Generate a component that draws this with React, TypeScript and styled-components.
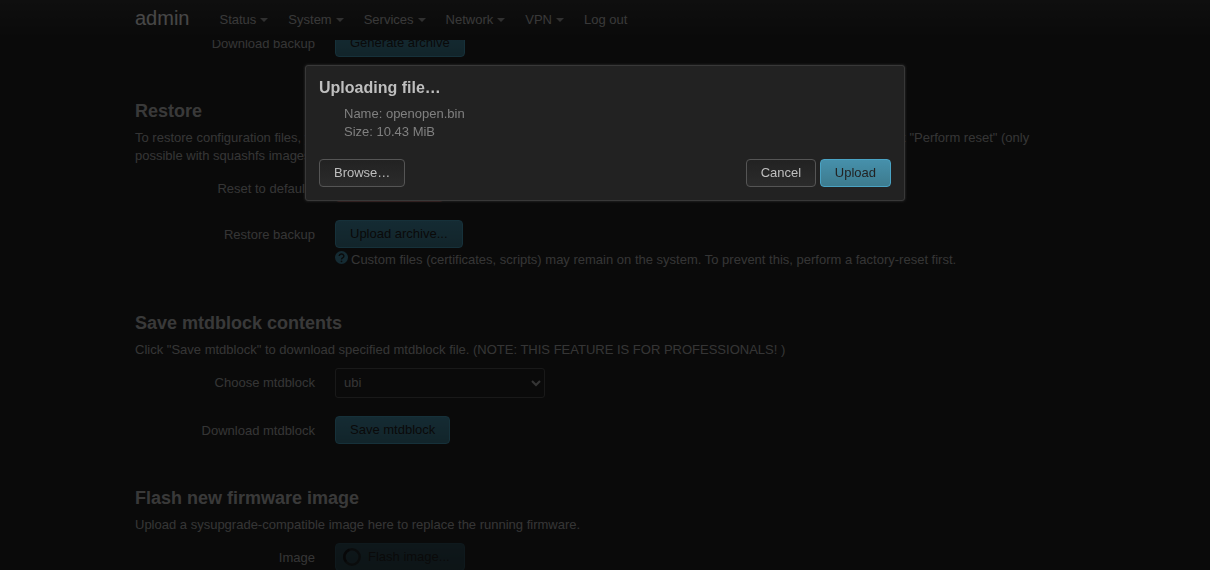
import React from "react";
import styled, { createGlobalStyle, css } from "styled-components";

const GlobalStyle = createGlobalStyle`
  * { box-sizing: border-box; }
  html, body { margin: 0; background: #222; }
  body {
    height: 100vh;
    overflow: hidden;
    color: #b3b3b3;
    font: 13px/18px "Liberation Sans", Arial, sans-serif;
  }
`;

const Header = styled.header`
  position: relative;
  z-index: 1;
  height: 40px;
  background: linear-gradient(#333, #222);
`;

const Container = styled.div`
  max-width: 940px;
  margin: 0 auto;
`;

const Bar = styled(Container)`
  display: flex;
  align-items: center;
  height: 40px;
`;

const Brand = styled.a`
  margin-right: 20px;
  padding-bottom: 4px;
  color: #eee;
  font-size: 20px;
  line-height: 20px;
  text-decoration: none;
`;

const Menu = styled.ul`
  display: flex;
  margin: 0;
  padding: 0;
  list-style: none;
`;

const MenuLink = styled.a<{ $caret?: boolean }>`
  display: flex;
  align-items: center;
  gap: 4px;
  padding: 0 10px;
  color: #bfbfbf;
  text-decoration: none;
  ${(p) =>
    p.$caret &&
    css`
      &::after {
        content: "";
        border: 4px solid transparent;
        border-top-color: currentColor;
        border-bottom: 0;
        opacity: 0.8;
      }
    `}
`;

const Main = styled(Container).attrs({ as: "main" })`
  margin-top: -11px;
`;

const Section = styled.section`
  margin-bottom: 36px;
`;

const Heading = styled.h3`
  margin: 0;
  font-size: 18px;
  line-height: 36px;
  color: #bfbfbf;
`;

const Description = styled.p`
  margin: 0 0 9px;
`;

const Row = styled.div`
  display: flex;
  gap: 20px;
  & + & {
    margin-top: 18px;
  }
`;

const Label = styled.label`
  flex: 0 0 180px;
  padding-top: 6px;
  text-align: right;
`;

const Field = styled.div`
  flex: 1;
`;

const Hint = styled.div`
  display: flex;
  gap: 3px;
  padding: 3px 0 0;
`;

type Tone = "neutral" | "action" | "negative";

const tones = {
  neutral: css`
    color: #bfbfbf;
    background: linear-gradient(#222, #2b2b2b);
    border-color: #555;
  `,
  action: css`
    color: #222;
    background: linear-gradient(#4690ab, #3d7b8e);
    border-color: #4aa3c4;
  `,
  negative: css`
    color: #222;
    background: linear-gradient(#b05a58, #974542);
    border-color: #a04a48;
  `,
};

const Button = styled.button<{ $tone?: Tone }>`
  display: inline-block;
  vertical-align: top;
  padding: 5px 14px 6px;
  border: 1px solid;
  border-radius: 4px;
  font: inherit;
  line-height: 15px;
  white-space: nowrap;
  ${(p) => tones[p.$tone ?? "neutral"]}
`;

const BusyButton = styled(Button)`
  display: flex;
  align-items: center;
  gap: 7px;
  height: 28px;
  padding-left: 7px;
  opacity: 0.4;
`;

const Select = styled.select`
  display: block;
  width: 210px;
  height: 30px;
  padding: 3px 4px 5px;
  color: #b3b3b3;
  background: #222;
  border: 1px solid #555;
  border-radius: 3px;
  font: inherit;
`;

const Overlay = styled.div`
  position: fixed;
  inset: 0;
  z-index: 2;
  padding: 65px 10px 0;
  background: rgba(0, 0, 0, 0.7);
`;

const Dialog = styled.div`
  max-width: 600px;
  margin: 0 auto;
  padding: 13px;
  background: #222;
  border: 1px solid #383838;
  border-radius: 3px;
  box-shadow: 0 0 3px #333;
`;

const DialogTitle = styled.h4`
  margin: 0 0 8px;
  color: #bfbfbf;
  font-size: 16px;
  line-height: 18px;
`;

const FileInfo = styled.ul`
  margin: 0 0 18px;
  padding: 0 0 0 25px;
  color: #808080;
  list-style: none;
`;

const Actions = styled.div`
  display: flex;
  justify-content: space-between;
`;

const HelpIcon = () => (
  <svg width="13" height="14" viewBox="0 0 13 14" aria-hidden="true">
    <circle cx="6.5" cy="6.5" r="6.5" fill="#4690ab" />
    <path d="M4.2 5.1a2.3 2.1 0 1 1 3.4 1.8c-.8.5-1.1.8-1.1 1.7" fill="none" stroke="#222" strokeWidth="1.4" />
    <circle cx="6.5" cy="10.3" r=".9" fill="#222" />
  </svg>
);

const Spinner = () => (
  <svg width="18" height="18" viewBox="0 0 18 18" fill="none" strokeWidth="2.6" aria-hidden="true">
    <circle cx="9" cy="9" r="7.7" stroke="#222" strokeOpacity=".8" />
    <path d="M3 13.8A7.7 7.7 0 0 1 6.5 1.7" stroke="#000" strokeOpacity=".7" />
  </svg>
);

const menus = ["Status", "System", "Services", "Network", "VPN"];

export default function App() {
  return (
    <>
      <GlobalStyle />
      <Header>
        <Bar>
          <Brand href="#">admin</Brand>
          <Menu>
            {menus.map((name) => (
              <li key={name}>
                <MenuLink href="#" $caret>{name}</MenuLink>
              </li>
            ))}
            <li>
              <MenuLink href="#">Log out</MenuLink>
            </li>
          </Menu>
        </Bar>
      </Header>
      <Main>
        <Section>
          <Row>
            <Label htmlFor="backup">Download backup</Label>
            <Field>
              <Button id="backup" $tone="action">Generate archive</Button>
            </Field>
          </Row>
        </Section>
        <Section>
          <Heading>Restore</Heading>
          <Description>
            To restore configuration files, you can upload a previously generated backup archive here. To reset the
            firmware to its initial state, click "Perform reset" (only possible with squashfs images).
          </Description>
          <Row>
            <Label htmlFor="reset">Reset to defaults</Label>
            <Field>
              <Button id="reset" $tone="negative">Perform reset</Button>
            </Field>
          </Row>
          <Row>
            <Label htmlFor="restore">Restore backup</Label>
            <Field>
              <Button id="restore" $tone="action">Upload archive...</Button>
              <Hint>
                <HelpIcon />
                Custom files (certificates, scripts) may remain on the system. To prevent this, perform a factory-reset
                first.
              </Hint>
            </Field>
          </Row>
        </Section>
        <Section>
          <Heading>Save mtdblock contents</Heading>
          <Description>
            Click "Save mtdblock" to download specified mtdblock file. (NOTE: THIS FEATURE IS FOR PROFESSIONALS! )
          </Description>
          <Row>
            <Label htmlFor="mtd">Choose mtdblock</Label>
            <Field>
              <Select id="mtd">
                <option>ubi</option>
              </Select>
            </Field>
          </Row>
          <Row>
            <Label htmlFor="save">Download mtdblock</Label>
            <Field>
              <Button id="save" $tone="action">Save mtdblock</Button>
            </Field>
          </Row>
        </Section>
        <Section>
          <Heading>Flash new firmware image</Heading>
          <Description>Upload a sysupgrade-compatible image here to replace the running firmware.</Description>
          <Row>
            <Label htmlFor="flash">Image</Label>
            <Field>
              <BusyButton id="flash" $tone="action" disabled>
                <Spinner />
                Flash image...
              </BusyButton>
            </Field>
          </Row>
        </Section>
      </Main>
      <Overlay>
        <Dialog role="dialog" aria-modal="true" aria-labelledby="dialog-title">
          <DialogTitle id="dialog-title">Uploading file…</DialogTitle>
          <FileInfo>
            <li>Name: openopen.bin</li>
            <li>Size: 10.43 MiB</li>
          </FileInfo>
          <Actions>
            <Button>Browse…</Button>
            <div>
              <Button>Cancel</Button> <Button $tone="action">Upload</Button>
            </div>
          </Actions>
        </Dialog>
      </Overlay>
    </>
  );
}
